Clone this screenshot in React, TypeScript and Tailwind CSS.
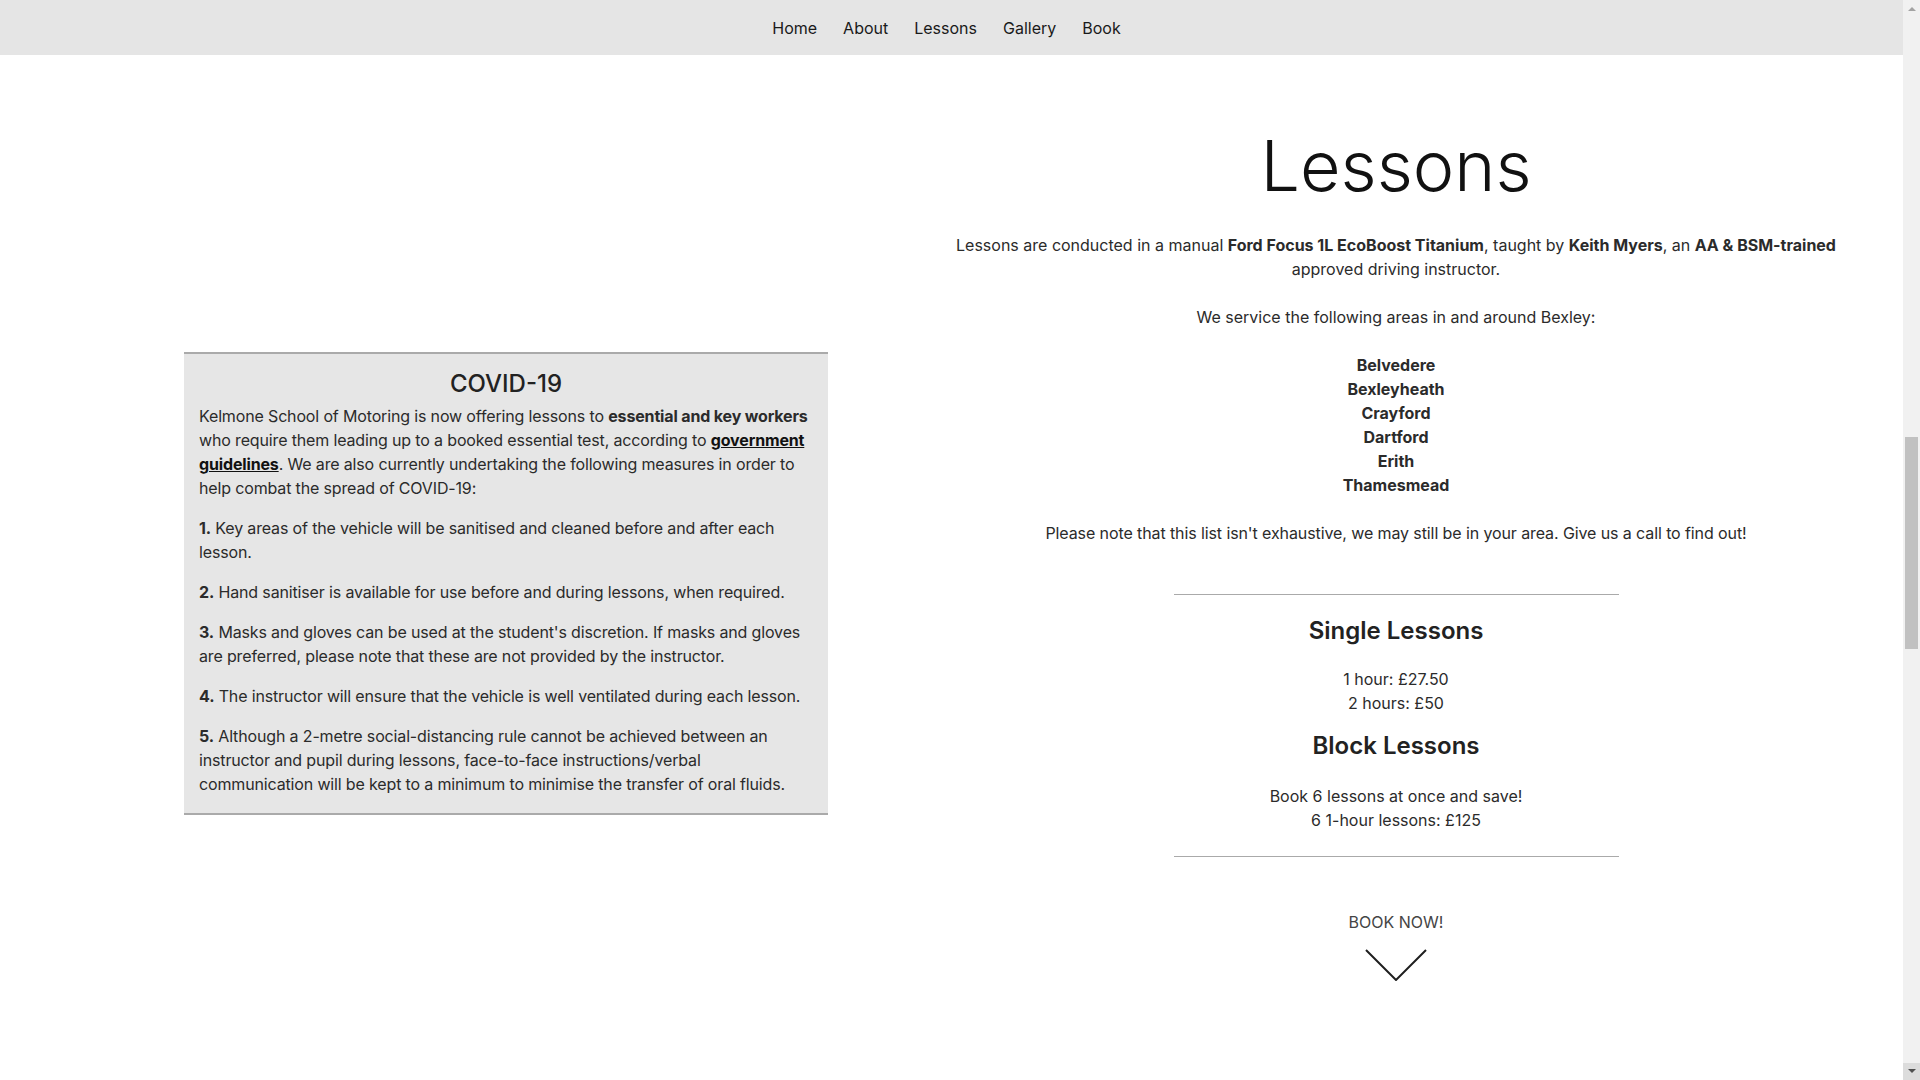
const navLinks = ['Home', 'About', 'Lessons', 'Gallery', 'Book'];

const areas = ['Belvedere', 'Bexleyheath', 'Crayford', 'Dartford', 'Erith', 'Thamesmead'];

const measures = [
  {
    num: '1.',
    lines: ['Key areas of the vehicle will be sanitised and cleaned before and after each', 'lesson.'],
  },
  {
    num: '2.',
    lines: ['Hand sanitiser is available for use before and during lessons, when required.'],
  },
  {
    num: '3.',
    lines: [
      "Masks and gloves can be used at the student's discretion. If masks and gloves",
      'are preferred, please note that these are not provided by the instructor.',
    ],
  },
  {
    num: '4.',
    lines: ['The instructor will ensure that the vehicle is well ventilated during each lesson.'],
  },
  {
    num: '5.',
    lines: [
      'Although a 2-metre social-distancing rule cannot be achieved between an',
      'instructor and pupil during lessons, face-to-face instructions/verbal',
      'communication will be kept to a minimum to minimise the transfer of oral fluids.',
    ],
  },
];

function Navbar() {
  return (
    <nav className="flex h-[55px] items-center justify-center bg-[#e5e5e5] pr-[10px]">
      {navLinks.map((link) => (
        <a key={link} href="#" className="px-[13px] text-[16px] text-[#1a1a1a]">
          {link}
        </a>
      ))}
    </nav>
  );
}

function CovidBox() {
  return (
    <div className="w-[644px] border-y-2 border-[#aaaaaa] bg-[#e6e6e6] px-[15px] pt-[15px] pb-[17px] text-[16px] leading-[24px] tracking-[-0.15px] text-[#2b2b2b]">
      <h2 className="mb-[6px] text-center text-[24px] leading-[29px] font-medium tracking-normal text-[#222]">
        COVID-19
      </h2>

      <p className="whitespace-nowrap">
        Kelmone School of Motoring is now offering lessons to <b>essential and key workers</b>
        <br />
        who require them leading up to a booked essential test, according to{' '}
        <a href="#" className="font-bold text-[#111] underline">
          government
          <br />
          guidelines
        </a>
        . We are also currently undertaking the following measures in order to
        <br />
        help combat the spread of COVID-19:
      </p>

      {measures.map((m) => (
        <p key={m.num} className="mt-4 whitespace-nowrap">
          <b>{m.num}</b>{' '}
          {m.lines.map((line, i) => (
            <span key={i}>
              {i > 0 && <br />}
              {line}
            </span>
          ))}
        </p>
      ))}
    </div>
  );
}

function LessonsInfo() {
  return (
    <div className="ml-[123px] flex w-[890px] flex-col items-center text-center text-[16px] leading-[24px] text-[#2b2b2b]">
      <h1 className="mt-[68px] text-[70px] leading-[86px] font-light text-[#111]">Lessons</h1>

      <p className="mt-[24px] whitespace-nowrap">
        Lessons are conducted in a manual <b>Ford Focus 1L EcoBoost Titanium</b>, taught by{' '}
        <b>Keith Myers</b>, an <b>AA &amp; BSM-trained</b>
        <br />
        approved driving instructor.
        <br />
        <br />
        We service the following areas in and around Bexley:
        <br />
        <br />
        {areas.map((area) => (
          <span key={area}>
            <b>{area}</b>
            <br />
          </span>
        ))}
        <br />
        <span className="tracking-[-0.1px]">
          Please note that this list isn't exhaustive, we may still be in your area. Give us a call to find out!
        </span>
      </p>

      <hr className="mt-[49px] w-[445px] border-t border-[#aaaaaa]" />

      <h3 className="mt-[21px] text-[24px] leading-[29px] font-semibold text-[#222]">Single Lessons</h3>
      <p className="mt-[22px]">
        1 hour: £27.50
        <br />
        2 hours: £50
      </p>

      <h3 className="mt-[16px] text-[24px] leading-[29px] font-semibold text-[#222]">Block Lessons</h3>
      <p className="mt-[24px]">
        Book 6 lessons at once and save!
        <br />6 1-hour lessons: £125
      </p>

      <hr className="mt-[24px] w-[445px] border-t border-[#aaaaaa]" />

      <a href="#" className="mt-[53px] flex flex-col items-center text-[#444]">
        <span>BOOK NOW!</span>
        <svg className="mt-[15px]" width="62" height="32" viewBox="0 0 62 32" fill="none">
          <polyline points="1,1 31,31 61,1" stroke="#1f1f1f" strokeWidth="2" />
        </svg>
      </a>
    </div>
  );
}

// the page's own scrollbar, as it shows in the window
function Scrollbar() {
  return (
    <div className="flex h-screen w-[17px] flex-col bg-[#f1f1f1]">
      <div className="flex h-[17px] items-center justify-center">
        <svg width="8" height="5" viewBox="0 0 8 5">
          <polygon points="0,5 4,1 8,5" fill="#a3a3a3" />
        </svg>
      </div>
      <div className="flex-1 px-[2px] pt-[420px]">
        <div className="h-[212px] bg-[#c1c1c1]" />
      </div>
      <div className="flex h-[17px] items-center justify-center bg-[#dcdcdc]">
        <svg width="8" height="5" viewBox="0 0 8 5">
          <polygon points="0,0 8,0 4,4" fill="#505050" />
        </svg>
      </div>
    </div>
  );
}

export default function App() {
  return (
    <div
      className="flex h-screen overflow-hidden bg-white"
      style={{ fontFamily: 'Inter, "Noto Sans", "Liberation Sans", sans-serif' }}
    >
      <div className="flex-1">
        <Navbar />
        <main className="flex items-start pl-[184px]">
          <div className="mt-[297px]">
            <CovidBox />
          </div>
          <LessonsInfo />
        </main>
      </div>
      <Scrollbar />
    </div>
  );
}
